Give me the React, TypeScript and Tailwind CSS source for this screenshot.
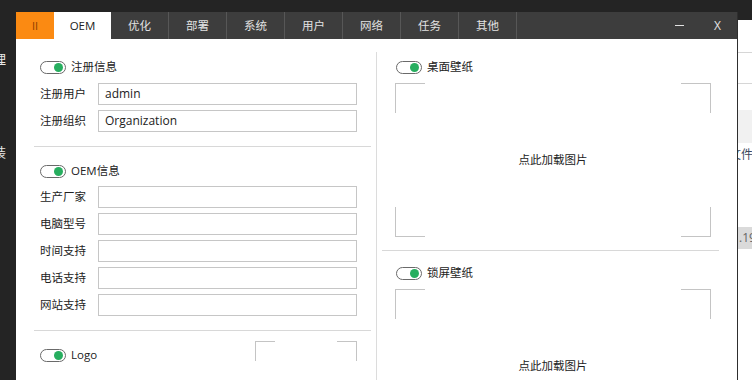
import React from "react"

const font = "font-['Open_Sans','Noto_Sans_CJK_SC',sans-serif]"

const tabs = ["优化", "部署", "系统", "用户", "网络", "任务", "其他"]

export default function App() {
	return (
		<div className={`flex h-[380px] w-[752px] overflow-hidden bg-[#242424] ${font} text-[11.5px] leading-none`}>
			<LeftStrip />
			<div className="mt-[12px] flex w-[722px] flex-col border-r border-[#2e2e2e]">
				<TitleBar />
				<div className="flex flex-1 bg-white text-[#222]">
					<LeftPanel />
					<div className="mt-[13px] w-px bg-[#dcdcdc]" />
					<RightPanel />
				</div>
			</div>
			<RightStrip />
		</div>
	)
}

function LeftStrip() {
	return (
		<div className="flex w-[16px] shrink-0 flex-col overflow-hidden text-[13px] text-[#e8e8e8]">
			<span className="-ml-[7px] mt-[53px]">理</span>
			<span className="-ml-[7px] mt-[80px]">装</span>
		</div>
	)
}

function RightStrip() {
	return (
		<div className="mt-[20px] flex flex-1 flex-col overflow-hidden bg-white">
			<div className="mt-[32px] h-px bg-[#d6d6d6]" />
			<div className="mt-[30px] h-px bg-[#d6d6d6]" />
			<div className="mt-[26px] h-[33px] bg-[#f1f1f1]" />
			<span className="-ml-[9px] mt-[6px] whitespace-nowrap text-[12px] text-[#3a4a60]">文件</span>
			<div className="mt-[66px] flex h-[22px] items-center bg-[#dadada] pl-[1px] text-[12px] text-[#666]">.19</div>
		</div>
	)
}

function TitleBar() {
	return (
		<div className="flex h-[27px] shrink-0 bg-[#3d3d3d] text-[#e2e2e2]">
			<div className="flex w-[38px] items-center justify-center bg-[#fb8a12] text-[11px] text-[#8a3c00]">II</div>
			<div className="flex w-[57px] items-center justify-center bg-white text-[#222]">OEM</div>
			{tabs.map((t) => (
				<div key={t} className="flex w-[58px] items-center justify-center border-r border-[#575757]">
					{t}
				</div>
			))}
			<div className="flex-1" />
			<div className="flex w-[38px] items-center justify-center">
				<div className="h-px w-[9px] bg-[#e2e2e2]" />
			</div>
			<div className="flex w-[39px] items-center justify-center text-[12px]">X</div>
		</div>
	)
}

function Toggle({ label }: { label: string }) {
	return (
		<div className="flex h-[16px] items-center gap-[5px]">
			<span className="flex h-[13px] w-[26px] items-center justify-end rounded-full border border-[#6a6a6a] bg-white pr-[2px]">
				<span className="h-[9px] w-[9px] rounded-full bg-[#27ae5f]" />
			</span>
			<span>{label}</span>
		</div>
	)
}

function Field({ label, value }: { label: string; value?: string }) {
	return (
		<div className="flex items-center">
			<span className="w-[58px]">{label}</span>
			<div className="flex h-[22px] flex-1 items-center border border-[#c6c6c6] px-[6px] text-[12px]">{value}</div>
		</div>
	)
}

function LeftPanel() {
	return (
		<div className="flex w-[360px] flex-col pl-[18px] pr-[5px] pt-[20px]">
			<div className="flex flex-col pl-[6px] pr-[14px]">
				<Toggle label="注册信息" />
				<div className="mt-[8px] flex flex-col gap-[5px]">
					<Field label="注册用户" value="admin" />
					<Field label="注册组织" value="Organization" />
				</div>
			</div>
			<div className="mt-[14px] h-px bg-[#d8d8d8]" />
			<div className="mt-[16px] flex flex-col pl-[6px] pr-[14px]">
				<Toggle label="OEM信息" />
				<div className="mt-[7px] flex flex-col gap-[5px]">
					<Field label="生产厂家" />
					<Field label="电脑型号" />
					<Field label="时间支持" />
					<Field label="电话支持" />
					<Field label="网站支持" />
				</div>
			</div>
			<div className="mt-[14px] h-px bg-[#d8d8d8]" />
			<div className="mt-[10px] flex items-start justify-between pl-[6px] pr-[14px]">
				<div className="mt-[6px]">
					<Toggle label="Logo" />
				</div>
				<ImageBox className="h-[100px] w-[102px]" arm="w-[20px]" armV="h-[20px]" />
			</div>
		</div>
	)
}

function ImageBox({ className, arm, armV, text }: { className: string; arm: string; armV: string; text?: string }) {
	const c = "absolute bg-[#c4c4c4]"
	return (
		<div className={`relative flex shrink-0 items-center justify-center ${className}`}>
			<span className={`${c} left-0 top-0 h-px ${arm}`} />
			<span className={`${c} left-0 top-0 w-px ${armV}`} />
			<span className={`${c} right-0 top-0 h-px ${arm}`} />
			<span className={`${c} right-0 top-0 w-px ${armV}`} />
			<span className={`${c} bottom-0 left-0 h-px ${arm}`} />
			<span className={`${c} bottom-0 left-0 w-px ${armV}`} />
			<span className={`${c} bottom-0 right-0 h-px ${arm}`} />
			<span className={`${c} bottom-0 right-0 w-px ${armV}`} />
			{text && <span>{text}</span>}
		</div>
	)
}

function RightPanel() {
	return (
		<div className="flex flex-1 flex-col pl-[5px] pr-[18px] pt-[20px]">
			<div className="flex flex-col pl-[13px] pr-[8px]">
				<div className="pl-[1px]">
					<Toggle label="桌面壁纸" />
				</div>
				<ImageBox className="mt-[8px] h-[154px] w-full" arm="w-[30px]" armV="h-[30px]" text="点此加载图片" />
			</div>
			<div className="mt-[13px] h-px bg-[#d8d8d8]" />
			<div className="mt-[14px] flex flex-col pl-[13px] pr-[8px]">
				<div className="pl-[1px]">
					<Toggle label="锁屏壁纸" />
				</div>
				<ImageBox className="mt-[8px] h-[154px] w-full" arm="w-[30px]" armV="h-[30px]" text="点此加载图片" />
			</div>
		</div>
	)
}
